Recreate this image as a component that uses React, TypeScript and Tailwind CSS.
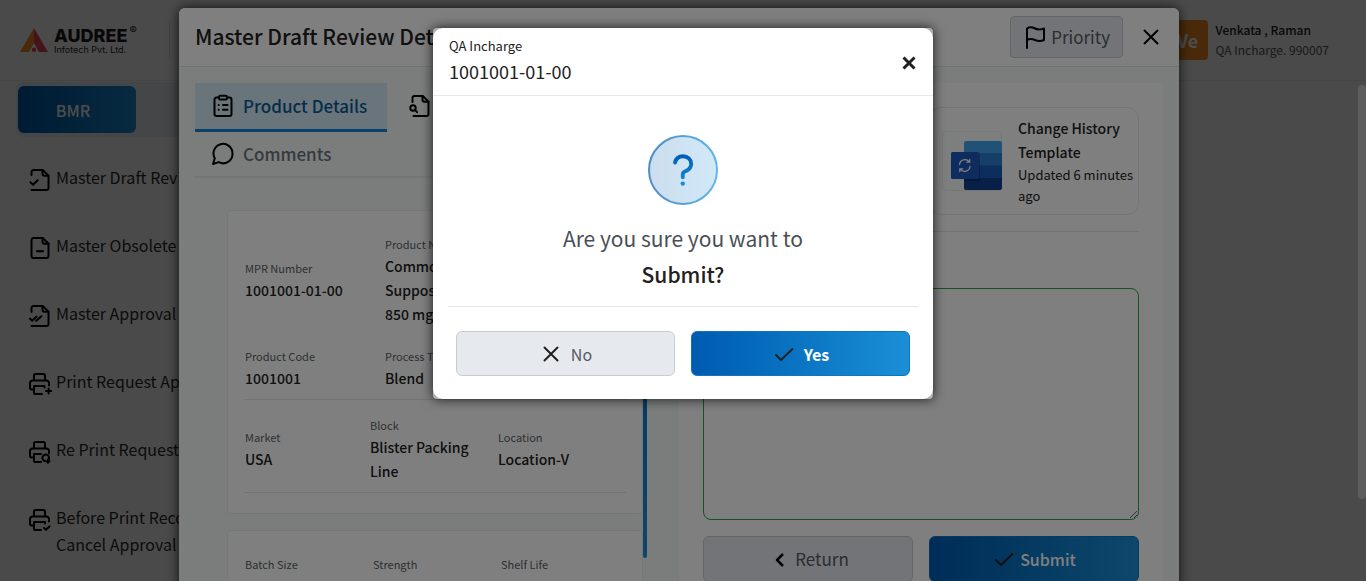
import type { ReactNode } from 'react';

const fontStack = "font-['Noto_Sans_CJK_SC',sans-serif]";

function Icon({ children, className = 'size-6' }: { children: ReactNode; className?: string }) {
  return (
    <svg
      viewBox="0 0 24 24"
      className={`shrink-0 ${className}`}
      fill="none"
      stroke="currentColor"
      strokeWidth="2"
      strokeLinecap="round"
      strokeLinejoin="round"
      aria-hidden="true"
    >
      {children}
    </svg>
  );
}

const FileFold = () => <path d="M14.5 2v3.8a2 2 0 0 0 2 2h4" />;

const DraftIcon = () => (
  <Icon>
    <path d="M3.5 7V4a2 2 0 0 1 2-2h9.3l5.7 5.8V20a2 2 0 0 1-2 2h-15" />
    <FileFold />
    <path d="m2.5 14.3 2.6 2.4 4.6-4.5" />
  </Icon>
);

const ObsoleteIcon = () => (
  <Icon>
    <path d="M5.5 2h9.3l5.7 5.8V20a2 2 0 0 1-2 2h-13a2 2 0 0 1-2-2V4a2 2 0 0 1 2-2z" />
    <FileFold />
    <path d="M9 15.3h6" />
  </Icon>
);

const ApprovalIcon = () => (
  <Icon>
    <path d="M3.5 8V4a2 2 0 0 1 2-2h9.3l5.7 5.8V20a2 2 0 0 1-2 2h-15" />
    <FileFold />
    <path d="m1.8 14.6 2.4 2.2 4.3-4.2M8.2 16.8l5.2-4.6" />
  </Icon>
);

const PrinterBase = () => (
  <path d="M6 7V3.6A1.6 1.6 0 0 1 7.6 2h7.8A1.6 1.6 0 0 1 17 3.6V7M4.5 17.5H4a2 2 0 0 1-2-2V11a2.5 2.5 0 0 1 2.5-2.5h14A2.5 2.5 0 0 1 21 11v2.5" />
);

const PrintAddIcon = () => (
  <Icon>
    <PrinterBase />
    <path d="M16.5 15.5V14H6v6.4A1.6 1.6 0 0 0 7.6 22H14M20.6 16.4v5.2M18 19h5.4" />
  </Icon>
);

const RePrintIcon = () => (
  <Icon>
    <PrinterBase />
    <path d="M13 14H6v6.4A1.6 1.6 0 0 0 7.6 22H13" />
    <path d="M16.5 21a3.3 3.3 0 1 1 3.6-.8M17.6 21.2h3.6M19.8 19.6l1.6 1.6-1.6 1.6" />
  </Icon>
);

const PrintCheckIcon = () => (
  <Icon>
    <PrinterBase />
    <path d="M17 15.5V14H6v6.4A1.6 1.6 0 0 0 7.6 22H13M16 20l1.9 1.8 3.6-3.4" />
  </Icon>
);

const ClipboardIcon = () => (
  <Icon>
    <path d="M8 3.5H5.5a2 2 0 0 0-2 2V20a2 2 0 0 0 2 2h13a2 2 0 0 0 2-2V5.5a2 2 0 0 0-2-2H16" />
    <rect x="8" y="1.8" width="8" height="3.6" rx="1.2" />
    <path d="M12 11h4.5M12 15.8h4.5M7.7 11h.01M7.7 15.8h.01" />
  </Icon>
);

const FileSearchIcon = () => (
  <Icon>
    <path d="M5.5 8V4a2 2 0 0 1 2-2h8.3l5.7 5.8V20a2 2 0 0 1-2 2h-13" />
    <path d="M15.5 2v3.8a2 2 0 0 0 2 2h4" />
    <circle cx="6" cy="14" r="2.7" />
    <path d="m8.2 16.2 1.8 2" />
  </Icon>
);

const CommentIcon = () => (
  <Icon>
    <path d="M21.5 11.5a9.3 9.3 0 0 1-13.800 8.600L2 22l1.800-5.800A9.500 9.500 0 1 1 21.500 11.500z" />
  </Icon>
);

const FlagIcon = () => (
  <Icon>
    <path d="M4 23V3.5c2.5-1.7 5-1.5 8 0s5.5 1.2 9 0V15c-3.5 1.5-6 1.3-9 0s-5.5-1.5-8 0" />
  </Icon>
);

const CheckIcon = () => (
  <Icon>
    <path d="m4 13 5 5L20.5 7" />
  </Icon>
);

const CrossIcon = () => (
  <Icon>
    <path d="m5.5 5.5 13 13M18.5 5.5l-13 13" />
  </Icon>
);

function Logo() {
  return (
    <div className="flex items-center gap-1.5">
      <svg viewBox="0 0 28 24" className="h-6 w-7" aria-hidden="true">
        <path d="M14 0 0 24h9l5-9z" fill="#f08a24" />
        <path d="M14 0v15l5 9h9z" fill="#e8455a" />
        <circle cx="14" cy="21.8" r="2.2" fill="#e8455a" />
      </svg>
      <div className="pt-1 font-['Inter',sans-serif] text-[#1d1d1f]">
        <div className="flex h-4 items-start gap-0.5">
          <span className="text-[18px] leading-4 font-extrabold">AUDREE</span>
          <span className="-mt-1 text-[11px] leading-3">®</span>
        </div>
        <div className="text-[9px] leading-3">Infotech Pvt. Ltd.</div>
      </div>
    </div>
  );
}

const navItems = [
  { icon: <DraftIcon />, label: 'Master Draft Review' },
  { icon: <ObsoleteIcon />, label: 'Master Obsolete' },
  { icon: <ApprovalIcon />, label: 'Master Approval' },
  { icon: <PrintAddIcon />, label: 'Print Request Approval' },
  { icon: <RePrintIcon />, label: 'Re Print Request' },
  { icon: <PrintCheckIcon />, label: 'Before Print Reconciliation Cancel Approval' },
];

function Page() {
  return (
    <div className="flex h-full flex-col bg-[#f8f8f8]">
      <header className="flex h-[81px] shrink-0 items-center justify-between border-b border-[#e4e6e8] pr-[37px] pl-5">
        <div className="flex items-center">
          <Logo />
          <div className="ml-8 h-9 w-px bg-[#dcdfe2]" />
        </div>
        <div className="flex items-center gap-2">
          <div className="flex size-10 items-center justify-center rounded bg-[#f58a1f] text-lg font-bold text-white">Ve</div>
          <div className="text-[12px] leading-5">
            <div className="font-medium text-[#212121]">Venkata , Raman</div>
            <div className="text-[#555]">QA Incharge. 990007</div>
          </div>
        </div>
      </header>
      <nav className="w-[290px] pl-4">
        <div className="mt-px rounded-lg bg-[#e6e9ef] py-1 pl-0.5">
          <button className="h-[47px] w-[118px] rounded-md bg-linear-to-r from-[#005bb0] to-[#1a8fd6] pr-2 text-[16px] font-medium text-white">
            BMR
          </button>
        </div>
        <ul className="mt-[27px] flex flex-col gap-10 pl-3 text-[16px] leading-[27px] text-[#2b2b2b]">
          {navItems.map((item) => (
            <li key={item.label}>
              <a href="#" className="flex items-start gap-1">
                <span className="pt-1 text-black">{item.icon}</span>
                <span className="w-52">{item.label}</span>
              </a>
            </li>
          ))}
        </ul>
      </nav>
    </div>
  );
}

function Field({ label, value }: { label: string; value?: string }) {
  return (
    <div>
      <div className="text-[11px] leading-5 text-[#5a5f66]">{label}</div>
      {value && <div className="text-[14px] leading-6 font-medium text-[#212121]">{value}</div>}
    </div>
  );
}

function DraftDialog() {
  return (
    <section
      aria-label="Master Draft Review Details"
      className="flex h-full w-full max-w-[1000px] flex-col overflow-hidden rounded-t-md bg-[#f7fbf9] shadow-[0_0_12px_rgba(0,0,0,0.8)]"
    >
      <header className="flex h-[59px] shrink-0 items-center justify-between border-b border-[#e3e5e8] bg-white px-4">
        <h1 className="text-[21px] font-medium text-[#212121]">Master Draft Review Details</h1>
        <div className="flex items-center gap-4">
          <button className="flex h-[42px] items-center gap-1 rounded border border-[#c6cace] bg-[#e6e9ee] px-3 text-[17px] text-[#555a62]">
            <span className="text-black"><FlagIcon /></span>
            Priority
          </button>
          <button aria-label="Close" className="text-black"><CrossIcon /></button>
        </div>
      </header>
      <div className="grid flex-1 grid-cols-2 p-4">
        <div>
          <div role="tablist" className="flex flex-wrap border-b-2 border-[#e9eced] text-[17px] font-medium text-[#6b7280]">
            <button role="tab" className="flex h-[49px] items-center gap-2 border-b-3 border-[#1280d0] bg-[#d3e9f7] pr-5 pl-4 text-[#0b5a94]">
              <span className="text-black"><ClipboardIcon /></span>
              Product Details
            </button>
            <button role="tab" className="flex h-[49px] items-center gap-2 border-b-3 border-transparent pr-12 pl-5">
              <span className="text-black"><FileSearchIcon /></span>
              Review Details
            </button>
            <button role="tab" className="flex h-11 items-center gap-2 px-4">
              <span className="text-black"><CommentIcon /></span>
              Comments
            </button>
          </div>
          <div className="mx-8 mt-8 flex items-start">
            <div className="flex flex-1 flex-col gap-4">
              <div className="rounded border border-[#e9edee] bg-white px-4 pb-5">
                <div className="grid grid-cols-[140px_110px] items-center gap-y-5 border-b border-[#e3e5e8] px-px pt-[23px] pb-[9px]">
                  <Field label="MPR Number" value="1001001-01-00" />
                  <Field label="Product Name" value="Common Suppositories 850 mg" />
                  <Field label="Product Code" value="1001001" />
                  <Field label="Process Type" value="Blend" />
                </div>
                <div className="grid grid-cols-[125px_128px_1fr] items-center border-b border-[#e3e5e8] px-px pt-[15px] pb-[9px]">
                  <Field label="Market" value="USA" />
                  <Field label="Block" value="Blister Packing Line" />
                  <Field label="Location" value="Location-V" />
                </div>
              </div>
              <div className="h-32 rounded border border-[#e9edee] bg-white px-4 pt-[23px]">
                <div className="grid grid-cols-[128px_128px_1fr] px-px">
                  <Field label="Batch Size" />
                  <Field label="Strength" />
                  <Field label="Shelf Life" />
                </div>
              </div>
            </div>
            <div className="h-[348px] w-1 rounded-sm bg-linear-to-b from-[#005bb0] to-[#1a8fd6]" />
          </div>
        </div>
        <div className="bg-white p-6">
          <div className="flex justify-end border-b border-[#e3e5e8] pb-4">
            <div className="flex w-[210px] items-center gap-4 rounded-xl border border-[#e6e9eb] py-2 pl-3">
              <div className="flex size-[60px] shrink-0 items-end justify-end rounded border border-[#edf1f1] bg-[#fafcfc]">
                <svg viewBox="0 0 51 49" className="-mr-px h-[49px] w-[51px]" aria-hidden="true">
                  <defs>
                    <clipPath id="doc"><rect x="13" y="0" width="38" height="49" rx="2" /></clipPath>
                  </defs>
                  <g clipPath="url(#doc)">
                    <rect x="13" width="38" height="13" fill="#41a5ee" />
                    <rect x="13" y="12" width="38" height="13" fill="#2b7cd3" />
                    <rect x="13" y="24.5" width="38" height="13" fill="#185abd" />
                    <rect x="13" y="37" width="38" height="13" fill="#103f91" />
                    <rect x="13" y="12" width="16" height="28" fill="#000" opacity="0.25" />
                  </g>
                  <rect x="0" y="11" width="28" height="27" rx="1.5" fill="#1c59c0" />
                  <g fill="none" stroke="#fff" strokeWidth="1.3" strokeLinecap="round">
                    <path d="M8.500 23.500a5.500 5.500 0 0 1 9.800-2.700M18.700 18.500v2.700h-3M19 25.500a5.500 5.500 0 0 1-9.800 2.700M8.800 30.500v-2.700h3" />
                  </g>
                </svg>
              </div>
              <div className="text-[#212121]">
                <div className="text-[14px] leading-6 font-medium">Change History Template</div>
                <div className="text-[13px] leading-[21px]">Updated 6 minutes ago</div>
              </div>
            </div>
          </div>
          <textarea
            aria-label="Remarks"
            className="mt-14 block h-[232px] w-full rounded-lg border border-[#28a745] bg-white p-3"
          />
          <div className="mt-4 grid grid-cols-2 gap-4">
            <button className="flex h-[46px] items-center justify-center gap-1 rounded-md border border-[#c6cace] bg-[#e6e9ee] text-[17px] text-[#555a62]">
              <span className="text-black">
                <Icon><path d="m16 7-6 6 6 6" strokeWidth="2.5" strokeLinecap="butt" /></Icon>
              </span>
              Return
            </button>
            <button className="flex h-[46px] items-center justify-center gap-1 rounded-md border border-[#0f75bd] bg-linear-to-r from-[#005bb0] to-[#1a8fd6] text-[16px] font-medium text-white">
              <span className="text-[#212121]"><CheckIcon /></span>
              Submit
            </button>
          </div>
        </div>
      </div>
    </section>
  );
}

function ConfirmDialog() {
  return (
    <section role="dialog" aria-label="Confirm" className="w-full max-w-[500px] rounded bg-[#b0b0b0] shadow-[0_0_12px_rgba(0,0,0,0.8)]">
      <div className="rounded-[10px] bg-white pb-[23px]">
        <header className="flex h-[68px] items-center justify-between border-b border-[#e6e8ea] px-4 text-[#212121]">
          <div className="pb-1.5">
            <div className="text-[13px] leading-6">QA Incharge</div>
            <div className="text-[18px] leading-[26px]">1001001-01-00</div>
          </div>
          <button aria-label="Close dialog" className="pt-0.5">
            <svg viewBox="0 0 16 16" className="size-4" fill="none" stroke="currentColor" strokeWidth="3" aria-hidden="true">
              <path d="m2.5 2.5 11 11M13.5 2.5l-11 11" />
            </svg>
          </button>
        </header>
        <div className="mx-[15px] flex flex-col items-center border-b border-[#e3e5e8] pt-[39px] pb-[14px]">
          <svg viewBox="0 0 70 70" className="size-[70px]" fill="none" aria-hidden="true">
            <defs>
              <linearGradient id="fill" x1="0" x2="1" y1="0" y2="0">
                <stop stopColor="#ccddee" />
                <stop offset="1" stopColor="#d1e9f8" />
              </linearGradient>
              <linearGradient id="ring" x1="0" x2="1" y1="0" y2="0">
                <stop stopColor="#4d8cc8" />
                <stop offset="1" stopColor="#62b5e6" />
              </linearGradient>
              <linearGradient id="mark" x1="0" x2="0" y1="19" y2="51" gradientUnits="userSpaceOnUse">
                <stop stopColor="#005cb4" />
                <stop offset="1" stopColor="#1b8fd8" />
              </linearGradient>
            </defs>
            <circle cx="35" cy="35" r="34" fill="url(#fill)" stroke="url(#ring)" strokeWidth="2" />
            <path
              d="M27 27.5c1-4 4.3-6.3 8-6.3 4.7 0 8.2 3.4 8.2 7.8 0 3.4-2 5.2-4.6 6.7-2.5 1.2-3.8 1.3-3.8 3.3v3.3"
              stroke="url(#mark)"
              strokeWidth="3.9"
              strokeLinecap="round"
              strokeLinejoin="round"
            />
            <circle cx="34.8" cy="48.6" r="2.2" fill="url(#mark)" />
          </svg>
          <p className="mt-[15px] text-center text-[21px] leading-9 text-[#4a4f57]">
            Are you sure you want to
            <br />
            <strong className="font-medium text-[#212121]">Submit?</strong>
          </p>
        </div>
        <div className="mt-6 grid grid-cols-2 gap-4 px-[23px] text-[16px]">
          <button className="flex h-[45px] items-center justify-center gap-2 rounded-md border border-[#c9cdd2] bg-[#e6e9ee] text-[#555a62]">
            <span className="text-[#212121]"><CrossIcon /></span>
            No
          </button>
          <button className="flex h-[45px] items-center justify-center gap-2 rounded-md border border-[#0f75bd] bg-linear-to-r from-[#005bb0] to-[#1a8fd6] font-bold text-white">
            <span className="text-[#212121]"><CheckIcon /></span>
            Yes
          </button>
        </div>
      </div>
    </section>
  );
}

export default function App() {
  return (
    <main className={`relative h-screen overflow-hidden ${fontStack}`}>
      <Page />
      <div className="absolute inset-0 flex overflow-hidden bg-black/40">
        <div className="flex h-[640px] flex-1 justify-center pt-2">
          <DraftDialog />
        </div>
        <div className="mt-[85px] h-[414px] w-2 rounded bg-[#bababa]" />
      </div>
      <div className="absolute inset-0 flex items-start justify-center bg-black/50 pt-7">
        <ConfirmDialog />
      </div>
    </main>
  );
}
